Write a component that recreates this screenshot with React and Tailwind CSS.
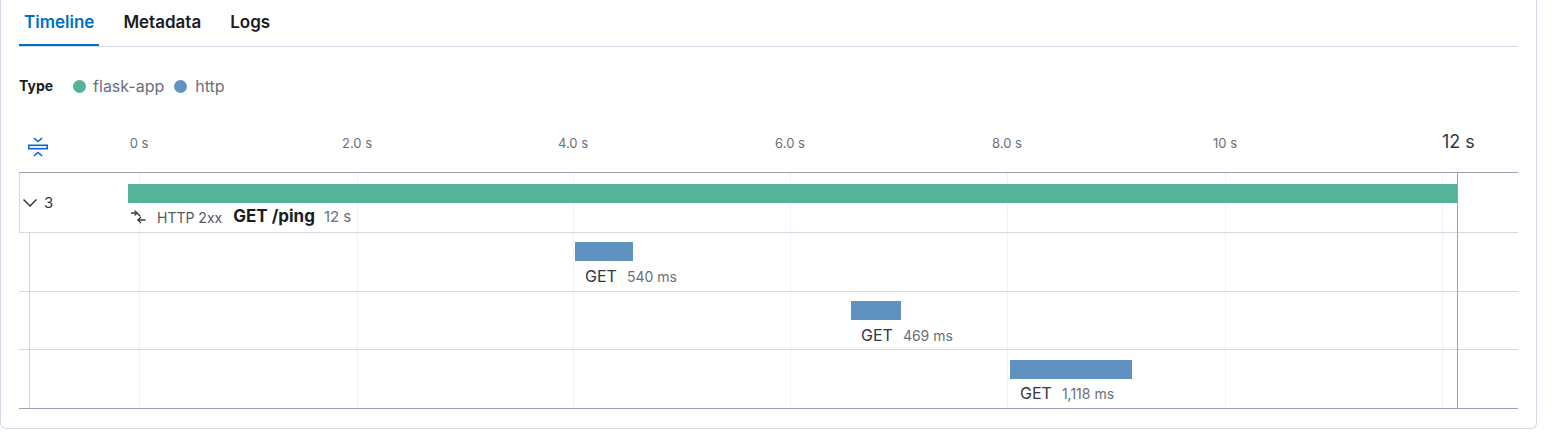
import React from "react";

const FONT = { fontFamily: "Inter, 'Noto Sans', sans-serif" };

const ticks = [
  { x: 120, label: "0 s" },
  { x: 338, label: "2.0 s" },
  { x: 554, label: "4.0 s" },
  { x: 771, label: "6.0 s" },
  { x: 988, label: "8.0 s" },
  { x: 1206, label: "10 s" },
];

const children = [
  { left: 556, width: 58, name: "GET", dur: "540 ms", h: "h-[59px]", top: 9 },
  { left: 832, width: 50, name: "GET", dur: "469 ms", h: "h-[58px]", top: 9 },
  { left: 991, width: 122, name: "GET", dur: "1,118 ms", h: "h-[58px]", top: 10, last: true },
];

function CollapseIcon() {
  return (
    <svg width="20" height="20" viewBox="0 0 20 20" fill="none" stroke="#0b64dd" strokeWidth="1.5">
      <path d="M6 1.2 L10 4.5 L14 1.2" />
      <rect x="0.75" y="8.25" width="18.5" height="3.5" fill="#e6f1fa" />
      <path d="M6 18.8 L10 15.5 L14 18.8" />
    </svg>
  );
}

function MergeIcon() {
  return (
    <svg width="16" height="16" viewBox="0 0 16 16" fill="none" stroke="#343741" strokeWidth="1.3" strokeLinecap="round" strokeLinejoin="round">
      <path d="M1.5 4h5.5l3 3" />
      <path d="M5 2l2 2-2 2" />
      <path d="M15 11H8" />
      <path d="M10.5 8.5L8 11l2.5 2.5" />
    </svg>
  );
}

export default function App() {
  return (
    <div className="w-[1556px] h-[448px] bg-white" style={FONT}>
      <div className="w-[1537px] h-[429px] border-x border-b border-[#d3dae6] rounded-b-[6px] px-[18px]">
        {/* Tabs */}
        <div className="flex h-[47px] border-b border-[#d3dae6] gap-[19px]">
          <div className="px-[5px] pt-[10px] leading-[24px] text-[17px] font-semibold text-[#0071c2] border-b-2 border-[#0071c2]">
            Timeline
          </div>
          <div className="px-[5px] pt-[10px] leading-[24px] text-[17px] font-semibold text-[#1a1c21]">
            Metadata
          </div>
          <div className="px-[5px] pt-[10px] leading-[24px] text-[17px] font-semibold text-[#1a1c21]">
            Logs
          </div>
        </div>

        {/* Legend */}
        <div className="mt-[29px] h-[20px] flex items-center">
          <span className="text-[14px] font-bold text-[#1a1c21] leading-[20px]">Type</span>
          <span className="ml-[20px] w-[13px] h-[13px] rounded-full bg-[#54b399]" />
          <span className="ml-[7px] text-[16px] text-[#69707d] leading-[20px]">flask-app</span>
          <span className="ml-[10px] w-[13px] h-[13px] rounded-full bg-[#6092c0]" />
          <span className="ml-[8px] text-[16px] text-[#69707d] leading-[20px]">http</span>
        </div>

        {/* Timeline header */}
        <div className="relative h-[76px]">
          <div className="absolute left-[9px] top-[41px]">
            <CollapseIcon />
          </div>
          {ticks.map((t) => (
            <span
              key={t.label}
              className="absolute top-[38px] -translate-x-1/2 text-[13px] leading-[18px] text-[#69707d] whitespace-nowrap"
              style={{ left: t.x }}
            >
              {t.label}
            </span>
          ))}
          <span className="absolute left-[1423px] top-[34px] text-[18px] leading-[24px] text-[#343741] whitespace-nowrap">
            12 s
          </span>
        </div>

        {/* Body */}
        <div className="relative border-t border-b border-[#98a2b3]">
          {/* grid lines */}
          {ticks.map((t) => (
            <div key={t.label} className="absolute top-0 bottom-0 w-px bg-[#f1f3f7]" style={{ left: t.x }} />
          ))}
          <div className="absolute top-0 bottom-0 left-[1423px] w-px bg-[#f1f3f7]" />
          <div className="absolute top-[60px] bottom-0 left-[10px] w-px bg-[#d3dae6]" />
          <div className="absolute top-0 bottom-0 left-[1438px] w-px bg-[#98a2b3] z-10" />

          {/* root row */}
          <div className="relative h-[60px] border-l border-b border-[#d3dae6] flex items-center">
            <svg className="ml-[2px]" width="16" height="10" viewBox="0 0 16 10" fill="none" stroke="#343741" strokeWidth="1.5">
              <path d="M1.5 1.5 L8 8 L14.5 1.5" />
            </svg>
            <span className="ml-[6px] text-[15px] text-[#343741] leading-[20px]">3</span>
            <div className="absolute left-[108px] top-[11px] h-[19px] w-[1329px] bg-[#54b399]" />
            <div className="absolute left-[110px] top-[34px] h-[20px] flex items-center whitespace-nowrap">
              <MergeIcon />
              <span className="ml-[11px] text-[14px] text-[#535966]">HTTP 2xx</span>
              <span className="ml-[11px] text-[17px] font-bold text-[#1a1c21]">GET /ping</span>
              <span className="ml-[9px] text-[15px] text-[#69707d]">12 s</span>
            </div>
          </div>

          {children.map((c, i) => (
            <div
              key={i}
              className={`relative ${c.h} ${c.last ? "" : "border-b border-[#d3dae6]"}`}
            >
              <div
                className="absolute h-[19px] bg-[#6092c0]"
                style={{ left: c.left, width: c.width, top: c.top }}
              />
              <div
                className="absolute top-[33px] h-[20px] flex items-center whitespace-nowrap"
                style={{ left: c.left + 10 }}
              >
                <span className="text-[16px] text-[#343741]">{c.name}</span>
                <span className="ml-[10px] text-[14px] text-[#69707d]">{c.dur}</span>
              </div>
            </div>
          ))}
        </div>
      </div>
    </div>
  );
}
